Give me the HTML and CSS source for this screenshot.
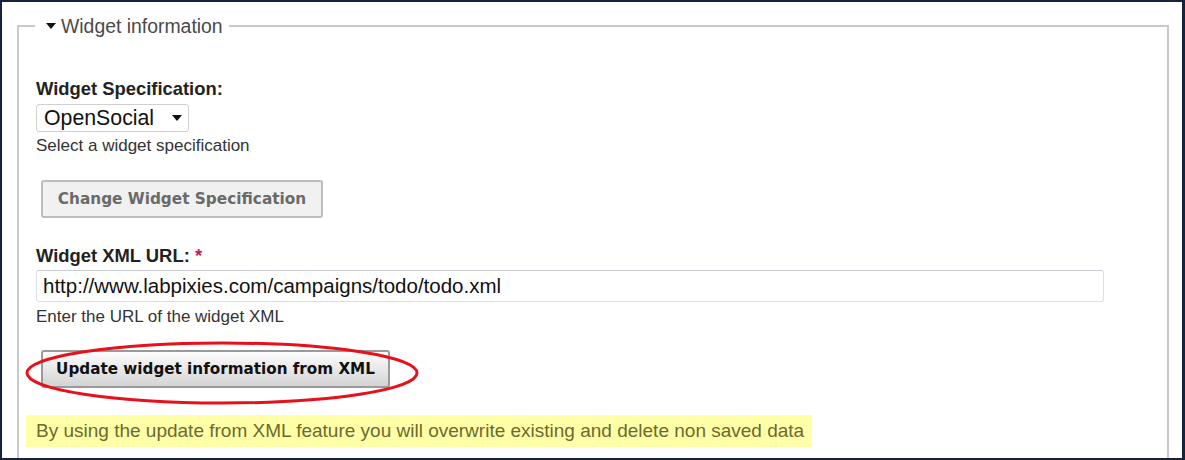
FILE: index.html
```html
<!DOCTYPE html>
<html>
<head>
<meta charset="utf-8">
<link rel="stylesheet" href="styles.css">
</head>
<body>
<div class="frame">
  <fieldset class="group">
    <legend class="group-legend"><span class="caret"></span>Widget information</legend>
    <div class="field field-spec">
      <label class="label">Widget Specification:</label>
      <div class="select"><span class="select-value">OpenSocial</span><span class="caret caret-select"></span></div>
      <div class="help">Select a widget specification</div>
    </div>
    <div class="btn-row btn-row-change">
      <button class="btn btn-disabled">Change Widget Specification</button>
    </div>
    <div class="field field-url">
      <label class="label">Widget XML URL: <span class="req">*</span></label>
      <div class="input">http://www.labpixies.com/campaigns/todo/todo.xml</div>
      <div class="help">Enter the URL of the widget XML</div>
    </div>
    <div class="btn-row btn-row-update">
      <button class="btn btn-update">Update widget information from XML</button>
      <svg class="highlight" width="400" height="66" viewBox="0 0 400 66"><ellipse cx="200" cy="33" rx="195" ry="30" fill="none" stroke="#e8101a" stroke-width="3"/></svg>
    </div>
    <div class="notice">By using the update from XML feature you will overwrite existing and delete non saved data</div>
  </fieldset>
</div>
</body>
</html>
```

FILE: styles.css
```css
html, body {
  margin: 0;
  padding: 0;
  background: #ffffff;
}
.frame {
  box-sizing: border-box;
  width: 1185px;
  height: 460px;
  border: 2px solid #14243d;
  border-right-width: 3px;
  overflow: hidden;
  padding: 14px 0 0 15px;
  font-family: "Liberation Sans", Arial, sans-serif;
  color: #222;
}
.group {
  box-sizing: border-box;
  width: 1152px;
  margin: 0;
  padding: 0 0 40px 17px;
  border: 2px solid #c9c9c9;
  border-bottom: none;
  min-width: 0;
}
.group-legend {
  margin-left: -1px;
  padding: 0 6px 0 11px;
  font-size: 19.4px;
  line-height: 20px;
  color: #4a4a4a;
  display: flex;
  align-items: center;
}
.caret {
  display: inline-block;
  width: 0;
  height: 0;
  border-left: 5px solid transparent;
  border-right: 5px solid transparent;
  border-top: 6px solid #111;
  margin-right: 5px;
}
.field {
  display: flex;
  flex-direction: column;
  align-items: flex-start;
}
.field-spec {
  margin-top: 43px;
}
.label {
  font-weight: bold;
  font-size: 18.4px;
  line-height: 20px;
  color: #222;
}
.req {
  color: #c0205a;
}
.select {
  box-sizing: border-box;
  margin-top: 5px;
  width: 153px;
  height: 28px;
  border: 1px solid #d0d0d0;
  border-radius: 3px;
  display: flex;
  align-items: center;
  justify-content: space-between;
  padding: 0 4px 0 7px;
  font-size: 21.3px;
  color: #111;
}
.caret-select {
  margin-right: 2px;
  border-top-color: #111;
}
.help {
  margin-top: 5px;
  font-size: 17px;
  line-height: 18px;
  color: #333;
}
.field-url .help {
  margin-top: 6px;
}
.btn-row {
  display: flex;
  position: relative;
  padding-left: 5px;
}
.btn-row-change {
  margin-top: 25px;
}
.btn {
  box-sizing: border-box;
  height: 38px;
  border-radius: 3px;
  font-family: "DejaVu Sans", Verdana, sans-serif;
  font-weight: bold;
  font-size: 15.3px;
  padding: 0;
}
.btn-disabled {
  width: 282px;
  background: #f1f1f1;
  border: 2px solid #bdbdbd;
  color: #6a6a6a;
}
.field-url {
  margin-top: 28px;
}
.input {
  box-sizing: border-box;
  margin-top: 4px;
  width: 1068px;
  height: 32px;
  border: 1px solid #dcdfe5;
  border-top-color: #c9ccd3;
  border-radius: 3px;
  display: flex;
  align-items: center;
  padding: 0 6px;
  font-size: 20.5px;
  color: #111;
}
.btn-row-update {
  margin-top: 24px;
}
.btn-update {
  width: 349px;
  background: linear-gradient(#fdfdfd, #e6e6e6 55%, #d4d4d4);
  border: 2px solid #9a9a9a;
  color: #111;
  font-size: 15.2px;
}
.highlight {
  position: absolute;
  left: -14px;
  top: -10px;
  width: 400px;
  height: 66px;
}
.notice {
  margin-top: 27px;
  margin-left: -10px;
  width: 786px;
  height: 32px;
  box-sizing: border-box;
  background: #ffffa8;
  padding-left: 10px;
  display: flex;
  align-items: center;
  font-size: 19px;
  color: #6b6b2e;
}
```
